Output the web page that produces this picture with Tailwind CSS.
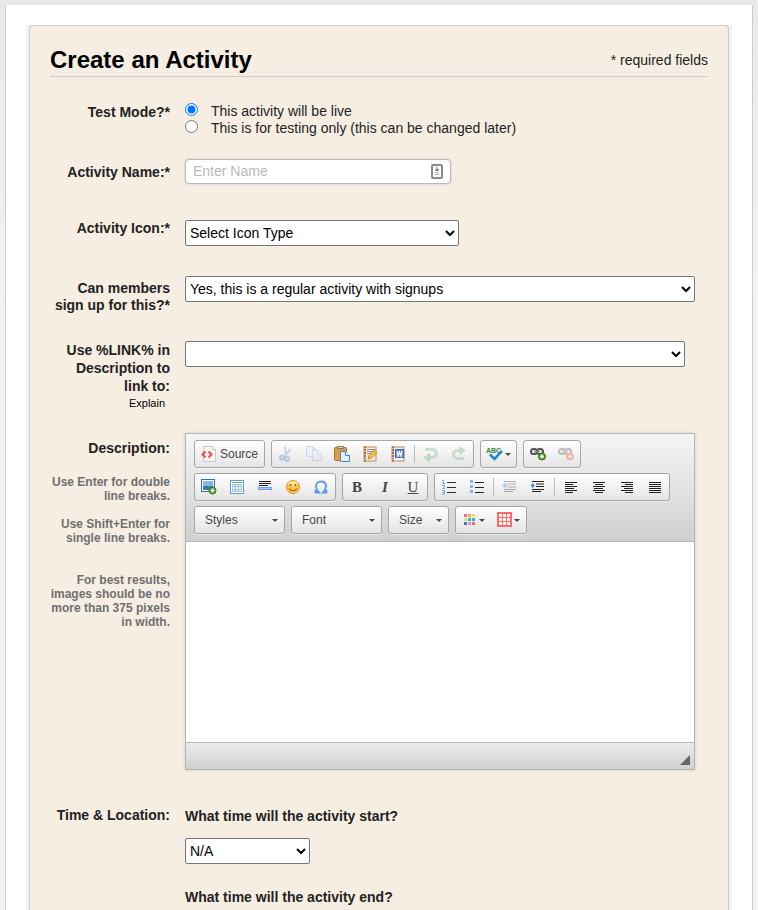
<!DOCTYPE html>
<html lang="en">
<head>
<meta charset="utf-8">
<meta name="viewport" content="width=device-width, initial-scale=1">
<title>Create an Activity</title>
<script src="https://cdn.jsdelivr.net/npm/@tailwindcss/browser@4"></script>
</head>
<body class="flex min-h-screen flex-col bg-[#f3f3f3] bg-linear-to-b from-[#e9e9e9] to-[#f3f3f3] to-[300px] px-[5px] pt-[5px] font-['Liberation_Sans',Arial,sans-serif] text-[14px] leading-[17px] text-[#222]">

<main class="flex flex-1 flex-col border-x border-[#ccc] bg-white px-5 pt-5">
<div class="flex flex-1 flex-col bg-[#f3f3f3] px-[3px]">
<form class="flex-1 rounded-t-[4px] border border-b-0 border-[#ccc] bg-[#f6eee3] px-5 pt-5">

  <header class="flex items-center justify-between border-b border-[#ccc] pb-[2px]">
    <h1 class="text-[24px] leading-[28px] font-bold text-black">Create an Activity</h1>
    <span>* required fields</span>
  </header>

  <fieldset class="mt-[26px] grid grid-cols-[120px_1fr] gap-x-[15px]" aria-labelledby="mode-label">
    <span id="mode-label" class="pt-px text-right font-bold">Test Mode?*</span>
    <div>
      <div class="flex items-start gap-[13px]"><input id="live" type="radio" name="mode" checked class="size-[13px] accent-[#0075ff]"><label for="live">This activity will be live</label></div>
      <div class="flex items-start gap-[13px]"><input id="test" type="radio" name="mode" class="size-[13px]"><label for="test">This is for testing only (this can be changed later)</label></div>
    </div>
  </fieldset>

  <div class="mt-[22px] grid grid-cols-[120px_1fr] gap-x-[15px]">
    <label for="name" class="pt-[5px] text-right font-bold">Activity Name:*</label>
    <div class="relative w-full max-w-[266px]">
      <input id="name" type="text" placeholder="Enter Name" class="block h-[25px] w-full rounded-[4px] border border-[#bbb] bg-white pr-7 pb-[2px] pl-[7px] text-[14px] shadow-[0_0_2px_#bbb] placeholder:text-[#b9b9b9]">
      <svg class="absolute top-[5px] right-2 h-[15px] w-3" viewBox="0 0 12 15"><rect x="1" y="1" width="10" height="13" rx="1" fill="#fff" stroke="#8a8a8a" stroke-width="2"/><path d="M5.500 3h1v2h1v2h-3V5h1z" fill="#777"/><path d="M4 8.500h4M4 10.500h4" stroke="#aaa"/></svg>
    </div>
  </div>

  <div class="mt-9 grid grid-cols-[120px_1fr] gap-x-[15px]">
    <label for="icon" class="text-right font-bold">Activity Icon:*</label>
    <select id="icon" class="h-[26px] w-full max-w-[274px] rounded-[2px] border border-[#767676] bg-white text-black"><option>Select Icon Type</option></select>
  </div>

  <div class="mt-[30px] grid grid-cols-[120px_1fr] gap-x-[15px]">
    <label for="signup" class="pt-1 text-right font-bold">Can members sign up for this?*</label>
    <select id="signup" class="h-[26px] w-full max-w-[510px] rounded-[2px] border border-[#767676] bg-white text-black"><option>Yes, this is a regular activity with signups</option></select>
  </div>

  <div class="mt-[27px] grid grid-cols-[120px_1fr] gap-x-[15px]">
    <div class="text-right">
      <label for="link" class="block pl-2 leading-[18px] font-bold">Use %LINK% in Description to link to:</label>
      <a href="#" class="mr-[5px] block text-[11px] text-black">Explain</a>
    </div>
    <select id="link" class="h-[26px] w-full max-w-[500px] rounded-[2px] border border-[#767676] bg-white text-black"><option></option></select>
  </div>

  <div class="mt-[21px] grid grid-cols-[120px_1fr] gap-x-[15px]">
    <div class="text-right font-bold">
      <label for="desc" class="block pt-[7px]">Description:</label>
      <div class="text-[12px] leading-[14px] text-[#707070]">
        <p class="mt-[18px]">Use Enter for double line breaks.</p>
        <p class="mt-[14px]">Use Shift+Enter for single line breaks.</p>
        <p class="-ml-1 mt-7">For best results, images should be no more than 375 pixels in width.</p>
      </div>
    </div>

    <div class="w-full max-w-[510px] border border-[#b6b6b6] bg-white shadow-[0_0_3px_rgba(0,0,0,0.15)]">
      <div role="toolbar" aria-label="Editor toolbar" class="flex flex-col gap-[5px] border-b border-[#b6b6b6] bg-linear-to-b from-[#f5f5f5] to-[#cfd1cf] px-2 pt-[6px] pb-[7px] text-[12px] text-[#474747]">

        <div class="flex gap-[6px]">
          <div class="flex h-7 items-center rounded-[3px] border border-[#a6a6a6] bg-linear-to-b from-white to-[#e4e4e4] shadow-[0_1px_0_rgba(255,255,255,0.5)]">
            <button type="button" class="flex items-center gap-[3px] px-[6px]"><svg class="size-4" viewBox="0 0 16 16"><path d="M2.500.5h9l3 3v12h-12z" fill="#f6f6f6" stroke="#c9c9c9"/><path d="M11.500.5v3h3" fill="#fff" stroke="#c9c9c9"/><path d="M4.500 5.500L1.500 8.500l3 3M7.500 5.500l3 3-3 3" fill="none" stroke="#f04a42" stroke-width="2"/></svg>Source</button>
          </div>
          <div class="flex h-7 items-center rounded-[3px] border border-[#a6a6a6] bg-linear-to-b from-white to-[#e4e4e4] shadow-[0_1px_0_rgba(255,255,255,0.5)]">
            <button type="button" disabled aria-label="Cut" class="px-[6px] opacity-35"><svg class="size-4" viewBox="0 0 16 16" fill="none"><path d="M7 0l1 10M12.500 3L6 11" stroke="#7fa5c8" stroke-width="2"/><circle cx="4" cy="11.500" r="2" stroke="#4b85bd" stroke-width="2"/><circle cx="9" cy="13" r="2" stroke="#4b85bd" stroke-width="2"/></svg></button>
            <button type="button" disabled aria-label="Copy" class="px-[6px] opacity-30"><svg class="size-4" viewBox="0 0 16 16" fill="#dcebf9" stroke="#6f9fd0"><path d="M.5.5h6l3 3v7h-9z"/><path d="M6.500.5v3h3" fill="none"/><path d="M6.500 4.500h5l4 4v6h-9z"/><path d="M11.500 4.500v4h4" fill="#fff"/></svg></button>
            <button type="button" aria-label="Paste" class="px-[6px]"><svg class="size-4" viewBox="0 0 16 16"><rect x=".5" y="1.500" width="12" height="13" rx="1" fill="#dc9c4b" stroke="#b06f25"/><rect x="3.500" y=".5" width="6" height="2" fill="#d8cdb8" stroke="#8d7b5f"/><path d="M6.500 5.500h5l4 4v6h-9z" fill="#e4f1fd" stroke="#3f88d0"/><path d="M11.500 5.500v4h4" fill="#fff" stroke="#3f88d0"/></svg></button>
            <button type="button" aria-label="Paste as plain text" class="px-[6px]"><svg class="size-4" viewBox="0 0 16 16"><rect x="2" y="1" width="12" height="14" fill="#f3ece5" stroke="#c08a62"/><path d="M3 .5v15" stroke="#b0683a" stroke-width="2"/><path d="M1 2.500h3M1 5.500h3M1 8.500h3M1 11.500h3M1 13.500h3" stroke="#d9c1ad"/><path d="M5 3.500h8M5 5.500h6M5 7.500h4" stroke="#958b84"/><path d="M6 13l1-3.500L12.500 4l2.500 2.500L9.500 12z" fill="#f8bf43" stroke="#c58a34"/></svg></button>
            <button type="button" aria-label="Paste from Word" class="px-[6px]"><svg class="size-4" viewBox="0 0 16 16"><rect x="2" y="1" width="12" height="14" fill="#f4f4f7" stroke="#c08a62"/><path d="M3 .5v15" stroke="#b0683a" stroke-width="2"/><path d="M1 2.500h3M1 5.500h3M1 8.500h3M1 11.500h3M1 13.500h3" stroke="#d9c1ad"/><rect x="5.500" y="3.500" width="8" height="8" fill="#6b92d8" stroke="#3b62ae"/><path d="M7 5l1 5 1.500-4L11 10l1-5" fill="none" stroke="#fff" stroke-width="1.200"/></svg></button>
            <span class="mx-[2px] h-[18px] w-px bg-[#bcbcbc]"></span>
            <button type="button" disabled aria-label="Undo" class="px-[6px] opacity-35"><svg class="size-4" viewBox="0 0 16 16" fill="none"><path d="M2 3.500h7.500a4 4 0 0 1 0 8H6" stroke="#7dbb7d" stroke-width="3"/><path d="M6.500 7.500v8L1.500 11.500z" fill="#7dbb7d" stroke="#5ba35b"/></svg></button>
            <button type="button" disabled aria-label="Redo" class="px-[6px] opacity-35"><svg class="size-4" viewBox="0 0 16 16" fill="none"><path d="M13 12.500H6.500a4 4 0 0 1 0-8H9" stroke="#7dbb7d" stroke-width="3"/><path d="M9 .5v8l5-4z" fill="#7dbb7d" stroke="#5ba35b"/></svg></button>
          </div>
          <div class="flex h-7 items-center rounded-[3px] border border-[#a6a6a6] bg-linear-to-b from-white to-[#e4e4e4] shadow-[0_1px_0_rgba(255,255,255,0.5)]">
            <button type="button" aria-label="Spell check" class="flex items-center gap-px px-[5px]"><svg class="h-4 w-[18px]" viewBox="0 0 18 16"><text x="0" y="7" font-family="Liberation Sans" font-size="7" font-weight="bold" fill="#398442">ABC</text><path d="M4 8.500l4.500 4.500L16 5" fill="none" stroke="#1685d1" stroke-width="2.500"/></svg><svg class="h-[3px] w-[6px]" viewBox="0 0 6 3"><path d="M0 0h6L3 3z" fill="#474747"/></svg></button>
          </div>
          <div class="flex h-7 items-center rounded-[3px] border border-[#a6a6a6] bg-linear-to-b from-white to-[#e4e4e4] shadow-[0_1px_0_rgba(255,255,255,0.5)]">
            <button type="button" aria-label="Link" class="px-[6px]"><svg class="size-4" viewBox="0 0 16 16" fill="none"><rect x="1" y="3" width="6" height="5" rx="2.500" stroke="#555" stroke-width="2"/><rect x="7" y="3" width="6" height="5" rx="2.500" stroke="#555" stroke-width="2"/><path d="M4 5.500h6" stroke="#888" stroke-width="1.500"/><circle cx="12" cy="10.500" r="3.500" fill="#4b9a28" stroke="#347216"/><path d="M12 8.500v4M10 10.500h4" stroke="#fff" stroke-width="1.500"/></svg></button>
            <button type="button" disabled aria-label="Unlink" class="px-[6px] opacity-35"><svg class="size-4" viewBox="0 0 16 16" fill="none"><rect x="1" y="3" width="6" height="5" rx="2.500" stroke="#555" stroke-width="2"/><rect x="7" y="3" width="6" height="5" rx="2.500" stroke="#555" stroke-width="2"/><path d="M4 5.500h6" stroke="#888" stroke-width="1.500"/><circle cx="12" cy="10.500" r="3.500" fill="#ed6423" stroke="#d65318"/><path d="M10 10.500h4" stroke="#fff" stroke-width="1.500"/></svg></button>
          </div>
        </div>

        <div class="flex gap-[6px]">
          <div class="flex h-7 items-center rounded-[3px] border border-[#a6a6a6] bg-linear-to-b from-white to-[#e4e4e4] shadow-[0_1px_0_rgba(255,255,255,0.5)]">
            <button type="button" aria-label="Image" class="px-[6px]"><svg class="size-4" viewBox="0 0 16 16"><rect x=".5" y=".5" width="13" height="12" fill="#fff" stroke="#3f6c9d"/><path d="M2 2h10v9H2z" fill="#7dbbe6"/><path d="M2 7.500l3-1 3 1 4-1V11H2z" fill="#3a7aa8"/><circle cx="11.500" cy="11.500" r="3.500" fill="#559e32" stroke="#387819"/><path d="M11.500 9.500v4M9.500 11.500h4" stroke="#fff" stroke-width="1.500"/></svg></button>
            <button type="button" aria-label="Table" class="px-[6px]"><svg class="size-4" viewBox="0 0 16 16"><rect x="1.500" y="1.500" width="13" height="13" fill="#fff" stroke="#6699d6"/><path d="M3 3.500h10" stroke="#62ad72"/><path d="M3.500 5.500h9v7h-9zM3 7.500h10M3 10.500h10M6.500 5.500v7M9.500 5.500v7" stroke="#9ec2ea" fill="none"/></svg></button>
            <button type="button" aria-label="Horizontal line" class="px-[6px]"><svg class="size-4" viewBox="0 0 16 16"><path d="M2 2.500h12M2 4.500h12M2 6.500h9" stroke="#222"/><rect x="1.500" y="8.500" width="13" height="2" fill="#a6c8fb" stroke="#6b9dec"/></svg></button>
            <button type="button" aria-label="Smiley" class="px-[6px]"><svg class="size-4" viewBox="0 0 16 16"><circle cx="8" cy="8" r="6.500" fill="#fbc84b" stroke="#de9421"/><ellipse cx="8" cy="4.500" rx="4.500" ry="2.500" fill="#ffe596"/><path d="M5.500 5v2M10.500 5v2" stroke="#8e5c13" stroke-width="1.500"/><path d="M4 9.500c2 3 6 3 8 0" fill="none" stroke="#995c0c" stroke-width="1.200"/></svg></button>
            <button type="button" aria-label="Special character" class="px-[6px]"><svg class="size-4" viewBox="0 0 16 16"><path d="M2.500 11v2.500h3.500C4 11.500 3 9.700 3 7.500 3 4.500 5 2.500 8 2.500s5 2 5 5c0 2.200-1 4-3 6h3.500V11" fill="none" stroke="#5c96e7" stroke-width="1.800"/></svg></button>
          </div>
          <div class="flex h-7 items-center rounded-[3px] border border-[#a6a6a6] bg-linear-to-b from-white to-[#e4e4e4] font-['Liberation_Serif',serif] text-[15px] leading-4 text-[#444] shadow-[0_1px_0_rgba(255,255,255,0.5)]">
            <button type="button" aria-label="Bold" class="w-7 font-bold">B</button>
            <button type="button" aria-label="Italic" class="w-7 font-bold italic">I</button>
            <button type="button" aria-label="Underline" class="w-7 underline">U</button>
          </div>
          <div class="flex h-7 items-center rounded-[3px] border border-[#a6a6a6] bg-linear-to-b from-white to-[#e4e4e4] shadow-[0_1px_0_rgba(255,255,255,0.5)]">
            <button type="button" aria-label="Numbered list" class="px-[6px]"><svg class="size-4" viewBox="0 0 16 16"><path d="M6 3.500h9M6 8.500h9M6 13.500h9" stroke="#333"/><path d="M1 1.500h1.500v3M1 4.500h3M1 6.500h2.500v1.500L1.500 9.500H4M1 11.500h2.500v3.500H1M1.500 13.300h2" fill="none" stroke="#75a8e7"/></svg></button>
            <button type="button" aria-label="Bulleted list" class="px-[6px]"><svg class="size-4" viewBox="0 0 16 16"><path d="M6 3.500h9M6 8.500h9M6 13.500h9" stroke="#222"/><path d="M1.500 1.500h2v2h-2zM1.500 6.500h2v2h-2zM1.500 11.500h2v2h-2z" fill="#a8cbf8" stroke="#75a8e7"/></svg></button>
            <span class="mx-[2px] h-[18px] w-px bg-[#bcbcbc]"></span>
            <button type="button" disabled aria-label="Decrease indent" class="px-[6px] opacity-35"><svg class="size-4" viewBox="0 0 16 16"><path d="M2 2.500h12M6 5h8M6 8h8M2 10.500h12M2 12.500h9" stroke="#222" stroke-width="1.200"/><path d="M0 6.500L4 3v2.500h2v2H4V10z" fill="#498bd9"/></svg></button>
            <button type="button" aria-label="Increase indent" class="px-[6px]"><svg class="size-4" viewBox="0 0 16 16"><path d="M2 2.500h12M6 5h8M6 7.500h8M2 10.500h12M2 12.500h9" stroke="#222" stroke-width="1.200"/><path d="M5 6.500L2 3.500v2H1v2h1v2z" fill="#498bd9"/></svg></button>
            <span class="mx-[2px] h-[18px] w-px bg-[#bcbcbc]"></span>
            <button type="button" aria-label="Align left" class="px-[6px]"><svg class="size-4" viewBox="0 0 16 16"><path d="M2 3.500h12M2 5.500h8M2 7.500h12M2 9.500h9M2 11.500h12M2 13.500h8" stroke="#222"/></svg></button>
            <button type="button" aria-label="Center" class="px-[6px]"><svg class="size-4" viewBox="0 0 16 16"><path d="M2 3.500h12M4 5.500h8M2 7.500h12M3 9.500h9M2 11.500h12M4 13.500h8" stroke="#222"/></svg></button>
            <button type="button" aria-label="Align right" class="px-[6px]"><svg class="size-4" viewBox="0 0 16 16"><path d="M2 3.500h12M6 5.500h8M2 7.500h12M5 9.500h9M2 11.500h12M6 13.500h8" stroke="#222"/></svg></button>
            <button type="button" aria-label="Justify" class="px-[6px]"><svg class="size-4" viewBox="0 0 16 16"><path d="M2 3.500h12M2 5.500h12M2 7.500h12M2 9.500h12M2 11.500h12M2 13.500h12" stroke="#222"/></svg></button>
          </div>
        </div>

        <div class="flex gap-[6px]">
          <div class="relative flex h-7 w-[91px] items-center rounded-[3px] border border-[#a6a6a6] bg-linear-to-b from-white to-[#e4e4e4] shadow-[0_1px_0_rgba(255,255,255,0.5)]">
            <select aria-label="Styles" class="h-full w-full appearance-none pl-[10px]"><option>Styles</option></select>
            <svg class="pointer-events-none absolute right-[6px] h-[3px] w-[6px]" viewBox="0 0 6 3"><path d="M0 0h6L3 3z" fill="#474747"/></svg>
          </div>
          <div class="relative flex h-7 w-[91px] items-center rounded-[3px] border border-[#a6a6a6] bg-linear-to-b from-white to-[#e4e4e4] shadow-[0_1px_0_rgba(255,255,255,0.5)]">
            <select aria-label="Font" class="h-full w-full appearance-none pl-[10px]"><option>Font</option></select>
            <svg class="pointer-events-none absolute right-[6px] h-[3px] w-[6px]" viewBox="0 0 6 3"><path d="M0 0h6L3 3z" fill="#474747"/></svg>
          </div>
          <div class="relative flex h-7 w-[61px] items-center rounded-[3px] border border-[#a6a6a6] bg-linear-to-b from-white to-[#e4e4e4] shadow-[0_1px_0_rgba(255,255,255,0.5)]">
            <select aria-label="Size" class="h-full w-full appearance-none pl-[10px]"><option>Size</option></select>
            <svg class="pointer-events-none absolute right-[6px] h-[3px] w-[6px]" viewBox="0 0 6 3"><path d="M0 0h6L3 3z" fill="#474747"/></svg>
          </div>
          <div class="flex h-7 items-center rounded-[3px] border border-[#a6a6a6] bg-linear-to-b from-white to-[#e4e4e4] shadow-[0_1px_0_rgba(255,255,255,0.5)]">
            <button type="button" aria-label="Text color" class="flex items-center gap-px px-[6px]"><svg class="size-4" viewBox="0 0 16 16"><path d="M2 2h3v3H2z" fill="#fa6b65"/><path d="M6 2h3v3H6z" fill="#f8a457"/><path d="M10 2h3v3h-3z" fill="#fbd56b"/><path d="M2 6h3v3H2z" fill="#cde29c"/><path d="M6 6h3v3H6z" fill="#36c36b"/><path d="M10 6h3v3h-3z" fill="#3aa7ea"/><path d="M2 10h3v3H2z" fill="#5671b5"/><path d="M6 10h3v3H6z" fill="#e38be4"/><path d="M10 10h3v3h-3z" fill="#fb665f"/></svg><svg class="h-[3px] w-[6px]" viewBox="0 0 6 3"><path d="M0 0h6L3 3z" fill="#474747"/></svg></button>
            <button type="button" aria-label="Background color" class="flex items-center gap-px px-[6px]"><svg class="size-4" viewBox="0 0 16 16"><path d="M0 0h15v15H0z" fill="#ff6b67"/><path d="M2 2h3v3H2zM6 2h3v3H6zM10 2h3v3h-3zM2 6h3v3H2zM6 6h3v3H6zM10 6h3v3h-3zM2 10h3v3H2zM6 10h3v3H6zM10 10h3v3h-3z" fill="#fff"/></svg><svg class="h-[3px] w-[6px]" viewBox="0 0 6 3"><path d="M0 0h6L3 3z" fill="#474747"/></svg></button>
          </div>
        </div>
      </div>

      <textarea id="desc" class="block h-[200px] w-full resize-none bg-white p-2"></textarea>
      <div class="flex h-[27px] items-end justify-end border-t border-[#b6b6b6] bg-linear-to-b from-[#ebebeb] to-[#cfd1cf] pr-1 pb-1">
        <svg class="size-[10px]" viewBox="0 0 10 10"><path d="M10 0v10H0z" fill="#666"/></svg>
      </div>
    </div>
  </div>

  <div class="mt-[37px] grid grid-cols-[120px_1fr] gap-x-[15px]">
    <span class="text-right font-bold">Time &amp; Location:</span>
    <div class="flex flex-col pt-px">
      <label for="start" class="font-bold">What time will the activity start?</label>
      <select id="start" class="mt-[13px] h-[26px] w-[125px] rounded-[2px] border border-[#767676] bg-white text-black"><option>N/A</option></select>
      <span class="mt-[25px] font-bold">What time will the activity end?</span>
    </div>
  </div>

</form>
</div>
</main>
</body>
</html>
